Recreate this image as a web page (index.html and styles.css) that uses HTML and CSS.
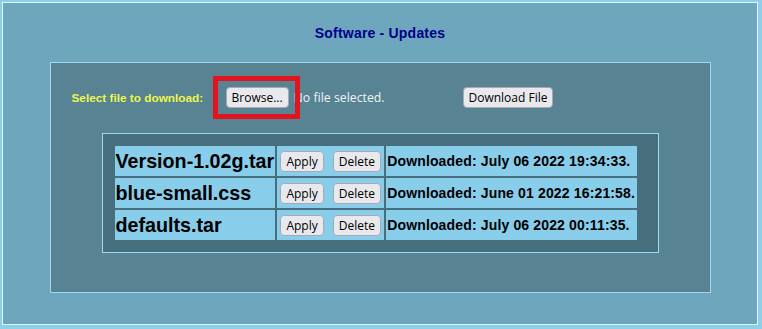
FILE: index.html
```html
<!DOCTYPE html>
<html lang="en">
<head>
<meta charset="utf-8">
<title>Software - Updates</title>
<link rel="stylesheet" href="styles.css">
</head>
<body>
<div class="page">
  <div class="header"><h1 class="title">Software - Updates</h1></div>
  <div class="panel">
    <div class="upload">
      <span class="label">Select file to download:</span>
      <span class="file">
        <span class="browse-wrap"><button class="btn">Browse...</button><span class="highlight"></span></span>
        <span class="nofile">No file selected.</span>
      </span>
      <span class="action"><button class="btn">Download File</button></span>
    </div>
    <div class="files">
      <div class="grid">
        <div class="cell name">Version-1.02g.tar</div>
        <div class="cell ops"><button class="btn">Apply</button><button class="btn">Delete</button></div>
        <div class="cell date">Downloaded: July 06 2022 19:34:33.</div>

        <div class="cell name">blue-small.css</div>
        <div class="cell ops"><button class="btn">Apply</button><button class="btn">Delete</button></div>
        <div class="cell date">Downloaded: June 01 2022 16:21:58.</div>

        <div class="cell name">defaults.tar</div>
        <div class="cell ops"><button class="btn">Apply</button><button class="btn">Delete</button></div>
        <div class="cell date">Downloaded: July 06 2022 00:11:35.</div>
      </div>
    </div>
  </div>
</div>
</body>
</html>
```

FILE: styles.css
```css
html, body {
  margin: 0;
  padding: 0;
}
body {
  background: #8bd0e9;
  padding: 2px;
  font-family: "Liberation Sans", Arial, sans-serif;
}
.page {
  box-sizing: border-box;
  width: 756px;
  height: 323px;
  border: 1px solid #e4f4fa;
  background: #6ea6bd;
}
.header {
  height: 59px;
  display: flex;
  align-items: center;
  justify-content: center;
}
.title {
  margin: 0;
  font-size: 14px;
  line-height: 16px;
  font-weight: bold;
  color: #000088;
  letter-spacing: 0.2px;
}
.panel {
  box-sizing: border-box;
  width: 661px;
  height: 231px;
  margin: 0 auto;
  border: 1px solid #a2d8ee;
  background: #578393;
  padding-top: 24px;
}
.upload {
  display: grid;
  grid-template-columns: 154px 237px auto;
  align-items: center;
  height: 21px;
  padding-left: 21px;
}
.label {
  color: #eef64c;
  font-weight: bold;
  font-size: 11.8px;
}
.file {
  display: flex;
  align-items: center;
}
.browse-wrap {
  position: relative;
  display: inline-flex;
}
.highlight {
  position: absolute;
  left: -13px;
  top: -11px;
  width: 87px;
  height: 43px;
  box-sizing: border-box;
  border: 5px solid #e3141f;
}
.nofile {
  margin-left: 5px;
  font-family: "Open Sans", "Liberation Sans", sans-serif;
  font-size: 12.3px;
  color: #eef3f5;
}
.btn {
  box-sizing: border-box;
  height: 21px;
  margin: 0;
  padding: 0 5px;
  border: 1px solid #a9a9b3;
  border-radius: 4px;
  background: #e9e9ed;
  color: #000;
  font-family: "Open Sans", "Liberation Sans", sans-serif;
  font-size: 12px;
  line-height: 19px;
}
.files {
  box-sizing: border-box;
  width: 557px;
  height: 120px;
  margin: 25px auto 0;
  border: 1px solid #a2d8ee;
  background: #466e7c;
  padding: 12px;
}
.grid {
  display: grid;
  grid-template-columns: auto 107px auto;
  grid-auto-rows: 30px;
  gap: 2px;
  justify-content: start;
}
.cell {
  background: #88cdea;
  display: flex;
  align-items: center;
  padding: 0 1px;
  color: #000;
  font-weight: bold;
  white-space: nowrap;
}
.name {
  font-size: 19.7px;
}
.ops {
  justify-content: center;
  gap: 9px;
}
.date {
  font-size: 14px;
  letter-spacing: 0.15px;
  padding-right: 2px;
}
```
